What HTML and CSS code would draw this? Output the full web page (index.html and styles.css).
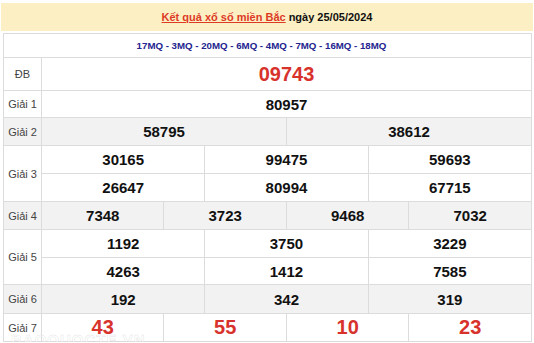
FILE: index.html
```html
<!DOCTYPE html>
<html lang="vi">
<head>
<meta charset="utf-8">
<title>Kết quả xổ số miền Bắc</title>
<link rel="stylesheet" href="styles.css">
</head>
<body>
<div class="wrap">
  <div class="head">
    <a class="head-link" href="#">Kết quả xổ số miền Bắc</a> <b>ngày 25/05/2024</b>
  </div>
  <table class="kq">
    <colgroup>
      <col class="c-label">
      <col><col><col><col><col><col><col><col><col><col><col><col>
    </colgroup>
    <tr class="r-mq">
      <td class="mq" colspan="13">17MQ - 3MQ - 20MQ - 6MQ - 4MQ - 7MQ - 16MQ - 18MQ</td>
    </tr>
    <tr class="r-db">
      <td class="lbl">ĐB</td>
      <td class="num big red" colspan="12">09743</td>
    </tr>
    <tr class="r-1">
      <td class="lbl">Giải 1</td>
      <td class="num" colspan="12">80957</td>
    </tr>
    <tr class="r-n grey">
      <td class="lbl">Giải 2</td>
      <td class="num" colspan="6">58795</td>
      <td class="num" colspan="6">38612</td>
    </tr>
    <tr class="r-n">
      <td class="lbl" rowspan="2">Giải 3</td>
      <td class="num" colspan="4">30165</td>
      <td class="num" colspan="4">99475</td>
      <td class="num" colspan="4">59693</td>
    </tr>
    <tr class="r-n">
      <td class="num" colspan="4">26647</td>
      <td class="num" colspan="4">80994</td>
      <td class="num" colspan="4">67715</td>
    </tr>
    <tr class="r-n grey">
      <td class="lbl">Giải 4</td>
      <td class="num" colspan="3">7348</td>
      <td class="num" colspan="3">3723</td>
      <td class="num" colspan="3">9468</td>
      <td class="num" colspan="3">7032</td>
    </tr>
    <tr class="r-n">
      <td class="lbl" rowspan="2">Giải 5</td>
      <td class="num" colspan="4">1192</td>
      <td class="num" colspan="4">3750</td>
      <td class="num" colspan="4">3229</td>
    </tr>
    <tr class="r-s">
      <td class="num" colspan="4">4263</td>
      <td class="num" colspan="4">1412</td>
      <td class="num" colspan="4">7585</td>
    </tr>
    <tr class="r-6 grey">
      <td class="lbl">Giải 6</td>
      <td class="num" colspan="4">192</td>
      <td class="num" colspan="4">342</td>
      <td class="num" colspan="4">319</td>
    </tr>
    <tr class="r-n">
      <td class="lbl">Giải 7</td>
      <td class="num big red" colspan="3">43</td>
      <td class="num big red" colspan="3">55</td>
      <td class="num big red" colspan="3">10</td>
      <td class="num big red" colspan="3">23</td>
    </tr>
  </table>
  <div class="watermark">BAOQUOCTE.VN</div>
</div>
</body>
</html>
```
FILE: styles.css
```css
html, body {
  margin: 0;
  padding: 0;
  background: #ffffff;
}
body {
  font-family: "Liberation Sans", Arial, sans-serif;
  color: #111;
}
.wrap {
  position: relative;
  width: 532px;
  margin-left: 1px;
  padding-top: 3px;
}
.head {
  height: 28px;
  background: #fcefc3;
  display: flex;
  align-items: center;
  justify-content: center;
  font-size: 11px;
  gap: 3px;
}
.head-link {
  color: #dd3a26;
  font-weight: bold;
  text-decoration: underline;
}
.head b {
  color: #111;
}
.kq {
  margin-top: 2px;
  margin-left: 2px;
  width: 529px;
  border-collapse: collapse;
  table-layout: fixed;
}
.c-label {
  width: 38px;
}
.kq td {
  border: 1px solid #dcdcdc;
  padding: 0;
  text-align: center;
  vertical-align: middle;
}
.r-mq { height: 24px; }
.r-db { height: 33px; }
.r-1 { height: 27px; }
.r-n { height: 28px; }
.r-s { height: 27px; }
.r-6 { height: 29px; }
.kq td.mq {
  font-size: 9.7px;
  font-weight: bold;
  color: #24248f;
  padding-right: 12px;
}
.lbl {
  font-size: 11px;
  color: #444;
}
.num {
  font-size: 15px;
  font-weight: bold;
  color: #111;
}
.big {
  font-size: 20px;
}
.red {
  color: #d8322c;
}
.grey td {
  background: #f2f2f2;
}
.watermark {
  position: absolute;
  left: 10px;
  top: 331px;
  font-size: 15px;
  font-weight: bold;
  letter-spacing: 1px;
  color: rgba(255, 255, 255, 0.5);
  -webkit-text-stroke: 0.5px rgba(170, 170, 170, 0.35);
  pointer-events: none;
}
```
